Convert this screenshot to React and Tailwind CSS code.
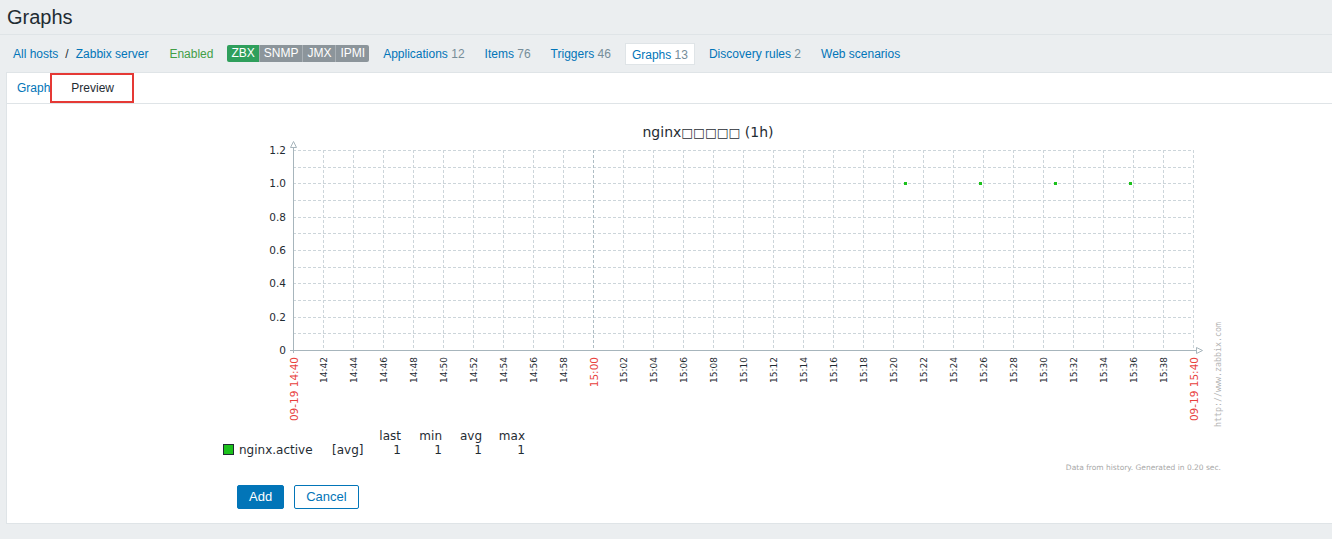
import React from 'react';

const navLinks = [
    { label: 'Applications', count: '12' },
    { label: 'Items', count: '76' },
    { label: 'Triggers', count: '46' },
    { label: 'Graphs', count: '13', active: true },
    { label: 'Discovery rules', count: '2' },
    { label: 'Web scenarios' },
];

const tags = [
    { label: 'ZBX', className: 'bg-[#2f9f5c]' },
    { label: 'SNMP', className: 'bg-[#8c959b]' },
    { label: 'JMX', className: 'bg-[#8c959b]' },
    { label: 'IPMI', className: 'bg-[#8c959b]' },
];

const X0 = 293;
const X1 = 1193;
const Y0 = 350;
const Y1 = 150;

const timeLabel = (i) => {
    const total = 14 * 60 + 40 + i * 2;
    const h = Math.floor(total / 60);
    const m = String(total % 60).padStart(2, '0');
    return `${h}:${m}`;
};

const Chart = () => {
    const hLines = Array.from({ length: 12 }, (_, k) => Y1 + (k * (Y0 - Y1)) / 12);
    const vLines = Array.from({ length: 30 }, (_, i) => X0 + 30 * (i + 1));
    const ticks = Array.from({ length: 31 }, (_, i) => i);
    const dots = [905, 980, 1055, 1130];

    return (
        <svg width="1015" height="366" viewBox="215 112 1015 366" className="block">
            {/* title */}
            <text x="708" y="137" textAnchor="middle" fontFamily="'DejaVu Sans', sans-serif" fontSize="14" fill="#1f2c33">
                nginx<tspan fontSize="12.5">□□□□□</tspan> (1h)
            </text>

            {/* grid */}
            {hLines.map((y) => (
                <line key={`h${y}`} x1={X0} x2={X1} y1={Math.round(y) + 0.5} y2={Math.round(y) + 0.5} stroke="#ccd5da" strokeDasharray="3 2" />
            ))}
            {vLines.map((x, i) => (
                <line key={`v${x}`} x1={x + 0.5} x2={x + 0.5} y1={Y1} y2={Y0} stroke={i === 9 ? '#aebdc4' : '#ccd5da'} strokeDasharray="3 2" />
            ))}

            {/* axes */}
            <line x1={X0 + 0.5} x2={X0 + 0.5} y1="146" y2={Y0 + 3} stroke="#a7b5bc" />
            <polygon points="290.5,147.5 296.5,147.5 293.5,141.5" fill="white" stroke="#a7b5bc" />
            <line x1={X0 - 3} x2="1196" y1={Y0 + 0.5} y2={Y0 + 0.5} stroke="#a7b5bc" />
            <polygon points="1196.5,347.5 1196.5,353.5 1202.5,350.5" fill="white" stroke="#a7b5bc" />

            {/* y labels */}
            {[0, 2, 4, 6, 8, 10, 12].map((k) => {
                const v = (12 - k) / 10;
                return (
                    <text key={`yl${k}`} x="286" y={Y1 + (k * (Y0 - Y1)) / 12 + 4} textAnchor="end" fontFamily="'DejaVu Sans', sans-serif" fontSize="10.5" fill="#1f2c33">
                        {v === 0 ? '0' : v.toFixed(1)}
                    </text>
                );
            })}

            {/* x labels */}
            {ticks.map((i) => {
                const x = X0 + 30 * i;
                const red = i === 0 || i === 10 || i === 30;
                const label = i === 0 ? '09-19 14:40' : i === 30 ? '09-19 15:40' : timeLabel(i);
                const bx = x + (red ? 4.5 : 4);
                return (
                    <text
                        key={`xl${i}`}
                        x={bx}
                        y="357"
                        transform={`rotate(-90 ${bx} 357)`}
                        textAnchor="end"
                        fontFamily="'DejaVu Sans', sans-serif"
                        fontSize={red ? 10.5 : 9}
                        fill={red ? '#e8403c' : '#1f2c33'}
                    >
                        {label}
                    </text>
                );
            })}

            {/* data points */}
            {dots.map((x) => (
                <rect key={`d${x}`} x={x - 1} y="182" width="3" height="3" fill="#1cc11c" />
            ))}

            {/* watermark */}
            <text x="1221" y="427" transform="rotate(-90 1221 427)" fontFamily="'DejaVu Sans Mono', monospace" fontSize="8.3" fill="#b5b5b5">
                http://www.zabbix.com
            </text>

            {/* legend */}
            <g fontFamily="'DejaVu Sans', sans-serif" fontSize="12" fill="#1f2c33">
                <text x="401" y="440" textAnchor="end">last</text>
                <text x="442" y="440" textAnchor="end">min</text>
                <text x="482" y="440" textAnchor="end">avg</text>
                <text x="525" y="440" textAnchor="end">max</text>
                <rect x="223.5" y="444.5" width="10" height="10" fill="#1cc11c" stroke="#1f2c33" />
                <text x="239" y="454">nginx.active</text>
                <text x="332" y="454">[avg]</text>
                <text x="401" y="454" textAnchor="end">1</text>
                <text x="442" y="454" textAnchor="end">1</text>
                <text x="482" y="454" textAnchor="end">1</text>
                <text x="525" y="454" textAnchor="end">1</text>
            </g>

            <text x="1221" y="470" textAnchor="end" fontFamily="'DejaVu Sans', sans-serif" fontSize="7.5" fill="#a8a8a8">
                Data from history. Generated in 0.20 sec.
            </text>
        </svg>
    );
};

const App = () => {
    return (
        <div className="w-[1332px] h-[539px] overflow-hidden bg-[#ebeef0] text-[12px] text-[#1f2c33] font-['Liberation_Sans',Arial,sans-serif]">
            {/* header */}
            <div className="h-[35px] border-b border-[#dfe4e7] pl-[7px] pt-[4px]">
                <h1 className="text-[20px] leading-[26px]">Graphs</h1>
            </div>

            {/* host nav */}
            <div className="h-[37px] flex items-center pl-[13px]">
                <a className="text-[#0275b8]">All hosts</a>
                <span className="ml-[7px] mr-[7px]">/</span>
                <a className="text-[#0275b8]">Zabbix server</a>
                <span className="ml-[21px] text-[#429e47]">Enabled</span>
                <div className="ml-[14px] flex h-[17px] rounded-[2px] overflow-hidden">
                    {tags.map((t, i) => (
                        <span
                            key={t.label}
                            className={`${t.className} text-white leading-[17px] px-[4px] ${i > 0 ? 'border-l border-[#a9b0b5]' : ''}`}
                        >
                            {t.label}
                        </span>
                    ))}
                </div>
                <div className="ml-[8px] flex items-center">
                    {navLinks.map((l) => (
                        <span
                            key={l.label}
                            className={`px-[6px] h-[22px] leading-[22px] mr-[8px] ${l.active ? 'bg-white border border-[#dfe4e7] leading-[20px]' : ''}`}
                        >
                            <a className="text-[#0275b8]">{l.label}</a>
                            {l.count && <span className="text-[#768d99]"> {l.count}</span>}
                        </span>
                    ))}
                </div>
            </div>

            {/* content box */}
            <div className="ml-[6px] bg-white border border-r-0 border-[#dfe4e7]">
                <div className="relative h-[31px] border-b border-[#dfe4e7] flex items-center">
                    <a className="ml-[10px] text-[#0275b8]">Graph</a>
                    <span className="ml-[21px]">Preview</span>
                    <div className="absolute left-[43px] top-0 w-[84px] h-[30px] border-[2px] border-[#e53935]" />
                </div>

                <div className="pt-[8px] pl-[208px]">
                    <Chart />
                </div>

                <div className="flex gap-[10px] pl-[230px] pt-[7px] pb-[14px]">
                    <button className="h-[24px] px-[11px] rounded-[2px] bg-[#0275b8] border border-[#0275b8] text-white text-[13px]">
                        Add
                    </button>
                    <button className="h-[24px] px-[11px] rounded-[2px] bg-white border border-[#0275b8] text-[#0275b8] text-[13px]">
                        Cancel
                    </button>
                </div>
            </div>
        </div>
    );
};

export default App;
